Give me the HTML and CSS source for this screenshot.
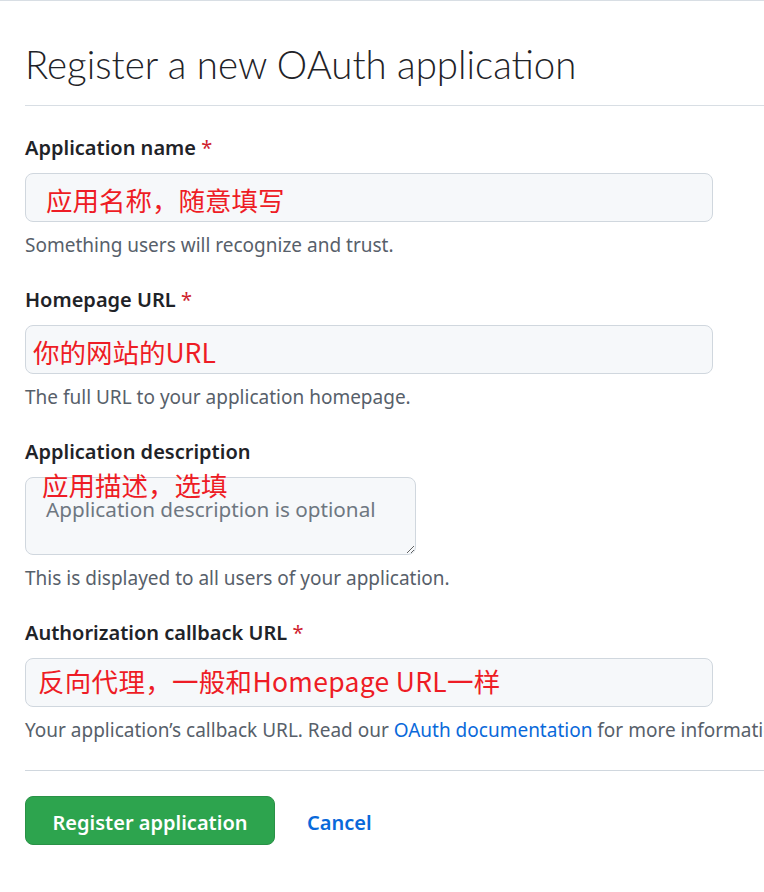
FILE: index.html
```html
<!DOCTYPE html>
<html lang="en">
<head>
<meta charset="utf-8">
<title>Register a new OAuth application</title>
<link rel="stylesheet" href="styles.css">
</head>
<body>
<div class="page">
  <div class="header">
    <h1 class="title">Register a new OAuth application</h1>
  </div>
  <form class="form">
    <div class="group">
      <label class="label">Application name <span class="req">*</span></label>
      <div class="input"><span class="anno anno-name">应用名称，随意填写</span></div>
      <p class="note">Something users will recognize and trust.</p>
    </div>
    <div class="group">
      <label class="label">Homepage URL <span class="req">*</span></label>
      <div class="input"><span class="anno anno-home">你的网站的URL</span></div>
      <p class="note">The full URL to your application homepage.</p>
    </div>
    <div class="group">
      <label class="label">Application description</label>
      <div class="textarea-wrap">
        <textarea class="textarea" placeholder="Application description is optional"></textarea>
        <span class="anno anno-desc">应用描述，选填</span>
      </div>
      <p class="note">This is displayed to all users of your application.</p>
    </div>
    <div class="group">
      <label class="label">Authorization callback URL <span class="req">*</span></label>
      <div class="input"><span class="anno anno-cb">反向代理，一般和Homepage URL一样</span></div>
      <p class="note">Your application’s callback URL. Read our <a class="link" href="#">OAuth documentation</a> for more information.</p>
    </div>
    <div class="actions">
      <button type="button" class="btn">Register application</button>
      <a class="cancel" href="#">Cancel</a>
    </div>
  </form>
</div>
</body>
</html>
```
FILE: styles.css
```css
html, body {
  margin: 0;
  padding: 0;
  background: #ffffff;
  overflow: hidden;
}
body {
  border-top: 1px solid #d8dee4;
  font-family: "Noto Sans", "Open Sans", sans-serif;
  color: #1f2328;
}
.page {
  width: 1000px;
  padding-left: 25px;
}
.header {
  padding-top: 40px;
  padding-bottom: 18px;
  border-bottom: 1px solid #d8dee4;
}
.title {
  margin: 0;
  font-family: "Lato", "Noto Sans", sans-serif;
  font-weight: 300;
  font-size: 38.4px;
  line-height: 46px;
  color: #1f2328;
}
.form {
  margin: 30px 0 0;
}
.group {
  margin-bottom: 32px;
}
.label {
  display: block;
  font-size: 20px;
  font-weight: 600;
  line-height: 24px;
  margin-bottom: 13px;
}
.req {
  color: #cf222e;
  font-weight: 400;
}
.input {
  box-sizing: border-box;
  width: 688px;
  height: 49px;
  background: #f6f8fa;
  border: 1px solid #d0d7de;
  border-radius: 8px;
  display: flex;
  align-items: center;
}
.anno {
  font-family: "Noto Sans CJK SC", "Noto Sans", sans-serif;
  font-size: 26.5px;
  line-height: 32px;
  color: #ee1c25;
  white-space: nowrap;
}
.anno-name { padding-left: 20px; margin-top: 4px; }
.anno-home { padding-left: 7px; margin-top: 4px; }
.anno-cb { padding-left: 12px; margin-top: -4px; letter-spacing: 0.3px; }
.textarea-wrap {
  position: relative;
  width: 391px;
  height: 78px;
}
.textarea {
  box-sizing: border-box;
  display: block;
  width: 391px;
  height: 78px;
  margin: 0;
  padding: 16px 20px;
  background: #f6f8fa;
  border: 1px solid #d0d7de;
  border-radius: 8px;
  font-family: "Noto Sans", sans-serif;
  font-size: 20.7px;
  line-height: 30px;
  color: #1f2328;
  resize: both;
}
.textarea::placeholder {
  color: #6e7781;
}
.anno-desc {
  position: absolute;
  left: 17px;
  top: -8px;
}
.note {
  margin: 12px 0 0;
  font-size: 19px;
  line-height: 22px;
  color: #57606a;
  white-space: nowrap;
}
.link {
  color: #0969da;
  text-decoration: none;
}
.actions {
  border-top: 1px solid #d0d7de;
  margin-top: -3px;
  padding-top: 25px;
  display: flex;
  align-items: center;
}
.btn {
  box-sizing: border-box;
  width: 250px;
  height: 49px;
  background: #2da44e;
  border: 1px solid #2a9147;
  border-radius: 8px;
  color: #ffffff;
  font-family: "Noto Sans", sans-serif;
  font-size: 20px;
  font-weight: 600;
  padding: 4px 0 0;
}
.cancel {
  margin-left: 32px;
  padding-top: 4px;
  color: #0969da;
  font-size: 20px;
  font-weight: 600;
  text-decoration: none;
}
```
